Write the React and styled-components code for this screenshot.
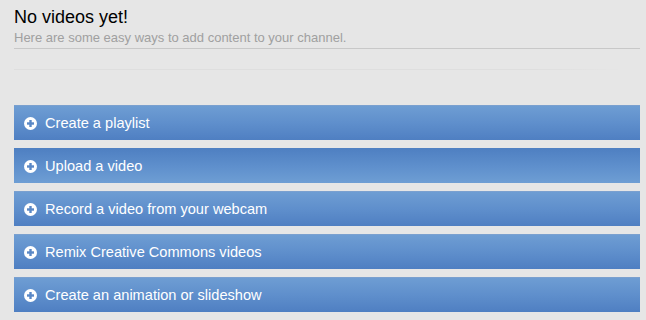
import React from "react";
import styled, { createGlobalStyle, css } from "styled-components";

const GlobalStyle = createGlobalStyle`
  html, body {
    margin: 0;
    padding: 0;
    background: #e6e6e6;
  }
  body {
    font-family: Arial, "Liberation Sans", sans-serif;
  }
`;

const items = [
  { label: "Create a playlist" },
  { label: "Upload a video", hover: true },
  { label: "Record a video from your webcam" },
  { label: "Remix Creative Commons videos" },
  { label: "Create an animation or slideshow" },
];

const PlusIcon = () => (
  <svg width="13" height="13" viewBox="0 0 13 13">
    <circle cx="6.5" cy="6.5" r="6.5" fill="#fff" />
    <rect x="3" y="5.3" width="7" height="2.4" fill="#5a88c6" />
    <rect x="5.3" y="3" width="2.4" height="7" fill="#5a88c6" />
  </svg>
);

const App = () => {
  return (
    <Page>
      <GlobalStyle />
      <Header>
        <Title>No videos yet!</Title>
        <Subtitle>Here are some easy ways to add content to your channel.</Subtitle>
      </Header>
      <FaintRule />
      <List>
        {items.map((item) => (
          <Bar key={item.label} $hover={item.hover}>
            <PlusIcon />
            <span>{item.label}</span>
          </Bar>
        ))}
      </List>
    </Page>
  );
};

export default App;

const Page = styled.div`
  padding: 6px 6px 0 14px;
  width: 626px;
`;

const Header = styled.div`
  border-bottom: 1px solid #c8c8c8;
  padding-bottom: 3px;
`;

const Title = styled.h1`
  margin: 0;
  font-size: 18px;
  font-weight: normal;
  color: #000;
  line-height: 22px;
`;

const Subtitle = styled.p`
  margin: 2px 0 0;
  font-size: 13px;
  color: #a0a0a0;
  line-height: 15px;
`;

const FaintRule = styled.div`
  margin-top: 20px;
  height: 1px;
  width: 610px;
  background: linear-gradient(to right, #dedede 0%, #dedede 85%, rgba(222, 222, 222, 0) 100%);
`;

const List = styled.div`
  margin-top: 35px;
  display: flex;
  flex-direction: column;
  gap: 8px;
`;

const Bar = styled.div`
  height: 35px;
  box-sizing: border-box;
  display: flex;
  align-items: center;
  gap: 8px;
  padding-left: 10px;
  color: #fff;
  font-size: 14.6px;
  background: linear-gradient(to bottom, #6e9dd3 0%, #5f8fcc 50%, #4f7fc2 100%);
  border-top: 1px solid #7aa0cf;

  ${(p) =>
    p.$hover &&
    css`
      background: linear-gradient(to bottom, #4f80c2 0%, #5e8fcc 50%, #6e9ed4 100%);
      border-top: 1px solid #4f80c2;
    `}

  svg {
    flex: none;
  }
`;
